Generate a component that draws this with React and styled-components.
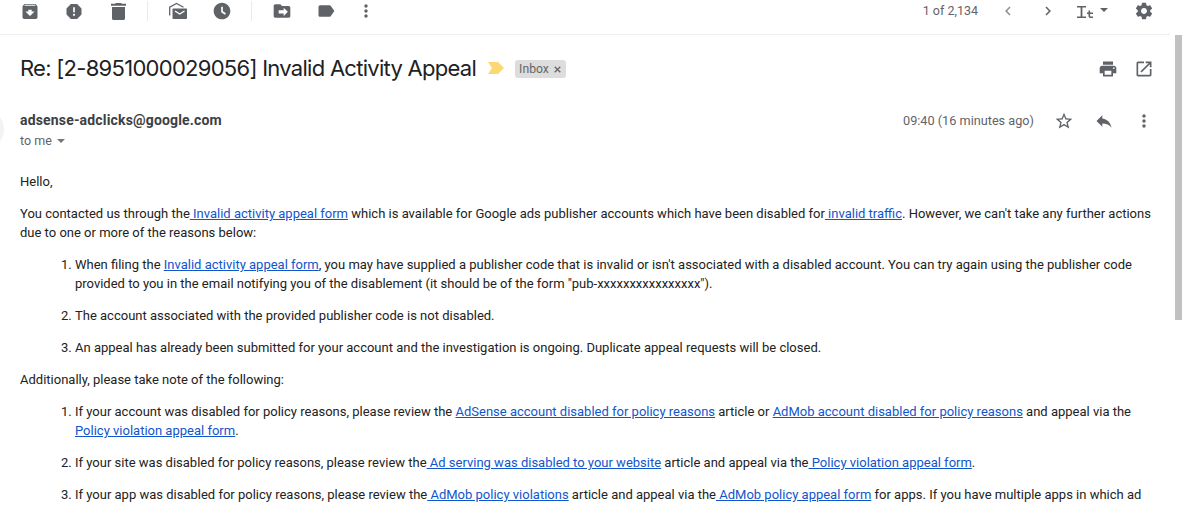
import React from "react";
import styled, { createGlobalStyle } from "styled-components";

const Global = createGlobalStyle`
  html, body { margin: 0; padding: 0; height: 506px; overflow: hidden; background: #fff; }
  body { font-family: Roboto, "Liberation Sans", sans-serif; color: #222; }
  * { box-sizing: border-box; }
`;

const Page = styled.div`
  width: 1182px; height: 506px; overflow: hidden; position: relative;
`;
const Toolbar = styled.header`
  width: 1170px; height: 35px; border-bottom: 1px solid #eeeeee;
  display: flex; align-items: flex-start; padding: 1px 16px 0 20px;
`;
const Tool = styled.button`
  width: ${p => p.$w || 20}px; height: 20px; padding: 0; margin: 0 ${p => p.$gap ?? 24}px 0 0;
  border: 0; background: none; display: flex; align-items: center; justify-content: center;
  color: ${p => p.$dim ? "#8a8d91" : "#5f6368"};
  svg { display: block; }
`;
const Divider = styled.span`
  width: 1px; height: 20px; background: #e8eaed; margin: 0 ${p => p.$right}px 0 0;
`;
const Spacer = styled.div`flex: 1;`;
const Count = styled.span`
  font-size: 12.5px; line-height: 19px; color: #5f6368; margin-right: 20px;
`;
const Main = styled.main`
  width: 1170px; padding: 0 30px 0 20px;
`;
const Scroll = styled.div`
  position: absolute; right: 0; top: 35px; width: 7px; height: 285px; background: #c1c1c1;
`;
const Avatar = styled.div`
  position: absolute; left: -36px; top: 109px; width: 40px; height: 40px; border-radius: 50%; background: #f1f3f4;
`;
const Subject = styled.div`
  height: 66px; display: flex; align-items: center;
`;
const Title = styled.h1`
  margin: 0; font: 400 22px/28px Inter, "Open Sans", sans-serif; color: #202124; letter-spacing: -0.72px;
`;
const Marker = styled.svg`margin: 0 11px 0 12px; display: block;`;
const Chip = styled.span`
  background: #dddddd; color: #666; border-radius: 3px; height: 18px; padding: 0 5px 0 4px; margin-top: 2px;
  font-size: 12.2px; line-height: 18px; display: flex; align-items: center; gap: 5px;
`;
const ChipX = styled.svg`display: block;`;
const SubjectActions = styled.div`
  display: flex; gap: 16px; margin: 2px -14px 0 auto; color: #5f6368;
`;
const Head = styled.div`
  display: flex; height: 71px; align-items: flex-start; padding-top: 9px;
`;
const Sender = styled.div`display: flex; flex-direction: column;`;
const From = styled.div`
  font-size: 14px; line-height: 20px; font-weight: 700; color: #3c4043; letter-spacing: .17px;
`;
const To = styled.div`
  font-size: 12.5px; line-height: 20px; color: #5f6368; margin-top: 1px; display: flex; align-items: center; gap: 5px;
`;
const Caret = styled.i`
  width: 0; height: 0; border: 4px solid transparent; border-top: 4px solid #777; border-bottom: 0; display: block;
`;
const Meta = styled.div`
  margin-left: auto; display: flex; align-items: flex-start; color: #5f6368; margin-right: -14px; margin-top: 1px;
`;
const Time = styled.span`font-size: 12.7px; line-height: 20px; margin: 0 20px 0 0;`;
const MetaIcon = styled.span`
  width: 20px; height: 20px; display: flex; align-items: center; justify-content: center; margin-left: ${p => p.$left || 0}px;
`;
const Body = styled.div`
  font-size: 13px; line-height: 19px; color: #222;
  width: 1132px;
`;
const Para = styled.p`margin: 0 0 13px;`;
const List = styled.ol`margin: 0 0 13px; padding: 0 0 0 55px;`;
const Item = styled.li`margin: 0 0 13px;`;
const A = styled.a`color: #1155cc; text-decoration: underline;`;

const Ico = ({ d, size = 20, vb = 24 }) => (
  <svg width={size} height={size} viewBox={`0 0 ${vb} ${vb}`} fill="currentColor"><path d={d} /></svg>
);
const P = {
  archive: "M20.54 5.23l-1.39-1.68C18.88 3.21 18.47 3 18 3H6c-.47 0-.88.21-1.16.55L3.46 5.23C3.17 5.57 3 6.02 3 6.5V19c0 1.1.9 2 2 2h14c1.1 0 2-.9 2-2V6.5c0-.48-.17-.93-.46-1.27zM12 17.5L6.5 12H10v-2h4v2h3.5L12 17.5zM5.12 5l.81-1h12l.94 1H5.12z",
  report: "M15.73 3H8.27L3 8.27v7.46L8.27 21h7.46L21 15.73V8.27L15.73 3zM12 17.3c-.72 0-1.3-.58-1.3-1.3 0-.72.58-1.3 1.3-1.3.72 0 1.3.58 1.3 1.3 0 .72-.58 1.3-1.3 1.3zm1-4.3h-2V7h2v6z",
  clock: "M11.99 2C6.47 2 2 6.48 2 12s4.47 10 9.99 10C17.52 22 22 17.52 22 12S17.52 2 11.99 2zM15.5 16.500 11 13.500V7h2v5.400l3.700 2.300z",
  move: "M20 6h-8l-2-2H4c-1.100 0-2 .9-2 2v12c0 1.100.9 2 2 2h16c1.100 0 2-.9 2-2V8c0-1.100-.9-2-2-2zm-6 12v-3H8v-4h6V8l5 5-5 5z",
  label: "M17.63 5.840C17.27 5.330 16.670 5 16 5L5 5.010C3.900 5.010 3 5.900 3 7v10c0 1.100.9 1.990 2 1.990L16 19c.67 0 1.270-.33 1.630-.84L22 12l-4.370-6.160z",
  more: "M12 8c1.100 0 2-.9 2-2s-.9-2-2-2-2 .9-2 2 .9 2 2 2zm0 2c-1.100 0-2 .9-2 2s.9 2 2 2 2-.9 2-2-.9-2-2-2zm0 6c-1.100 0-2 .9-2 2s.9 2 2 2 2-.9 2-2-.9-2-2-2z",
  prev: "M15.400 7.400 14 6l-6 6 6 6 1.400-1.400L10.800 12z",
  next: "M8.600 7.400 10 6l6 6-6 6-1.400-1.400L13.200 12z",
  gear: "M19.430 12.980c.04-.32.07-.64.07-.98s-.03-.66-.07-.98l2.110-1.650c.19-.15.24-.42.12-.64l-2-3.460c-.12-.22-.39-.3-.61-.22l-2.490 1c-.52-.4-1.080-.73-1.690-.98l-.38-2.650C14.460 2.180 14.250 2 14 2h-4c-.25 0-.46.18-.49.42l-.38 2.650c-.61.25-1.170.59-1.690.98l-2.490-1c-.23-.09-.49 0-.61.22l-2 3.460c-.13.22-.07.49.12.64l2.110 1.650c-.04.32-.07.650-.07.98s.03.66.07.98l-2.110 1.650c-.19.15-.24.42-.12.64l2 3.460c.12.22.39.3.61.22l2.490-1c.52.4 1.080.73 1.690.98l.38 2.650c.03.24.24.42.49.42h4c.25 0 .46-.18.49-.42l.38-2.650c.61-.25 1.170-.59 1.690-.98l2.490 1c.23.09.49 0 .61-.22l2-3.460c.12-.22.07-.49-.12-.64l-2.110-1.650zM12 15.500c-1.930 0-3.500-1.570-3.500-3.500s1.570-3.500 3.500-3.500 3.500 1.570 3.500 3.500-1.570 3.500-3.500 3.500z",
  print: "M19 8H5c-1.660 0-3 1.340-3 3v6h4v4h12v-4h4v-6c0-1.660-1.340-3-3-3zm-3 11H8v-5h8v5zm3-7c-.55 0-1-.45-1-1s.45-1 1-1 1 .45 1 1-.45 1-1 1zm-1-9H6v4h12V3z",
  open: "M19 19H5V5h7V3H5c-1.110 0-2 .9-2 2v14c0 1.100.89 2 2 2h14c1.100 0 2-.9 2-2v-7h-2v7zM14 3v2h3.590l-9.830 9.830 1.410 1.410L19 6.410V10h2V3h-7z",
  star: "M22 9.240l-7.190-.62L12 2 9.190 8.630 2 9.240l5.460 4.730L5.820 21 12 17.270 18.180 21l-1.630-7.030L22 9.240zM12 15.400l-3.760 2.270 1-4.280-3.320-2.880 4.380-.38L12 6.100l1.710 4.040 4.380.38-3.320 2.880 1 4.280L12 15.400z",
  reply: "M10 9V5l-7 7 7 7v-4.100c5 0 8.500 1.600 11 5.100-1-5-4-10-11-11z",
};

const TrashIcon = () => (
  <svg width="20" height="20" viewBox="0 0 20 20" fill="currentColor">
    <path d="M8 2h5l1 .8h4v2H3v-2h4zM4 6h13v11.500c0 .8-.7 1.500-1.500 1.500h-10c-.8 0-1.500-.7-1.500-1.500z" />
  </svg>
);
const UnreadIcon = () => (
  <svg width="20" height="20" viewBox="0 0 20 20" fill="none">
    <path d="M1.700 14.500V6.200L8.500 2.500l7 3.700" stroke="currentColor" strokeWidth="1.300" />
    <path d="M5.500 7.500H18c.6 0 1 .4 1 1V17c0 .6-.4 1-1 1H5.500c-.6 0-1-.4-1-1V8.500c0-.6.4-1 1-1z" fill="currentColor" />
    <path d="M7 10l4.700 3 4.800-3" stroke="#fff" strokeWidth="1.400" />
  </svg>
);
const TextSizeIcon = () => (
  <svg width="32" height="20" viewBox="0 0 32 20" fill="#5f6368">
    <path d="M1 5h9v1.500H6.400v9H10V17H1v-1.500h3.600v-9H1z" />
    <path d="M12.500 9.500h1.600v2H17v1.400h-2.900v1.900c0 .6.300.8.800.8H17V17h-2.400c-1.400 0-2.100-.7-2.100-2v-2.100H11v-1.400h1.500z" />
    <path d="M24 7h8l-4 4z" />
  </svg>
);

export default function App() {
  return (
    <Page>
      <Global />
      <Toolbar>
        <Tool><Ico d={P.archive} size={21} /></Tool>
        <Tool><Ico d={P.report} size={21} /></Tool>
        <Tool $gap={19}><TrashIcon /></Tool>
        <Divider $right={20} />
        <Tool><UnreadIcon /></Tool>
        <Tool $gap={19}><Ico d={P.clock} /></Tool>
        <Divider $right={20} />
        <Tool><Ico d={P.move} /></Tool>
        <Tool $gap={20}><Ico d={P.label} /></Tool>
        <Tool $gap={0}><Ico d={P.more} /></Tool>
        <Spacer />
        <Count>1 of 2,134</Count>
        <Tool $gap={20} $dim><Ico d={P.prev} size={18} /></Tool>
        <Tool $gap={18}><Ico d={P.next} size={18} /></Tool>
        <Tool $w={32} $gap={26}><TextSizeIcon /></Tool>
        <Tool $gap={0}><Ico d={P.gear} /></Tool>
      </Toolbar>
      <Avatar />
      <Scroll />
      <Main>
        <Subject>
          <Title>Re: [2-8951000029056] Invalid Activity Appeal</Title>
          <Marker width="16" height="12" viewBox="0 0 16 12"><path d="M0 0h10l6 6-6 6H0l4-6z" fill="#fbd872" /></Marker>
          <Chip>Inbox
            <ChipX width="7" height="7" viewBox="0 0 7 7"><path d="M.7.7l5.600 5.600M6.300.7.7 6.300" stroke="#666" strokeWidth="1.300" /></ChipX>
          </Chip>
          <SubjectActions>
            <Ico d={P.print} />
            <Ico d={P.open} />
          </SubjectActions>
        </Subject>
        <Head>
          <Sender>
            <From>adsense-adclicks@google.com</From>
            <To>to me <Caret /></To>
          </Sender>
          <Meta>
            <Time>09:40 (16 minutes ago)</Time>
            <MetaIcon><Ico d={P.star} /></MetaIcon>
            <MetaIcon $left={20}><Ico d={P.reply} /></MetaIcon>
            <MetaIcon $left={20}><Ico d={P.more} /></MetaIcon>
          </Meta>
        </Head>
        <Body>
          <Para>Hello,</Para>
          <Para>You contacted us through the<A> Invalid activity appeal form</A> which is available for Google ads publisher accounts which have been disabled for<A> invalid traffic</A>. However, we can't take any further actions due to one or more of the reasons below:</Para>
          <List>
            <Item>When filing the <A>Invalid activity appeal form</A>, you may have supplied a publisher code that is invalid or isn't associated with a disabled account. You can try again using the publisher code provided to you in the email notifying you of the disablement (it should be of the form "pub-xxxxxxxxxxxxxxxx").</Item>
            <Item>The account associated with the provided publisher code is not disabled.</Item>
            <Item>An appeal has already been submitted for your account and the investigation is ongoing. Duplicate appeal requests will be closed.</Item>
          </List>
          <Para>Additionally, please take note of the following:</Para>
          <List>
            <Item>If your account was disabled for policy reasons, please review the <A>AdSense account disabled for policy reasons</A> article or <A>AdMob account disabled for policy reasons</A> and appeal via the <A>Policy violation appeal form</A>.</Item>
            <Item>If your site was disabled for policy reasons, please review the<A> Ad serving was disabled to your website</A> article and appeal via the<A> Policy violation appeal form</A>.</Item>
            <Item>If your app was disabled for policy reasons, please review the<A> AdMob policy violations</A> article and appeal via the<A> AdMob policy appeal form</A> for apps. If you have multiple apps in which ad</Item>
          </List>
        </Body>
      </Main>
    </Page>
  );
}
